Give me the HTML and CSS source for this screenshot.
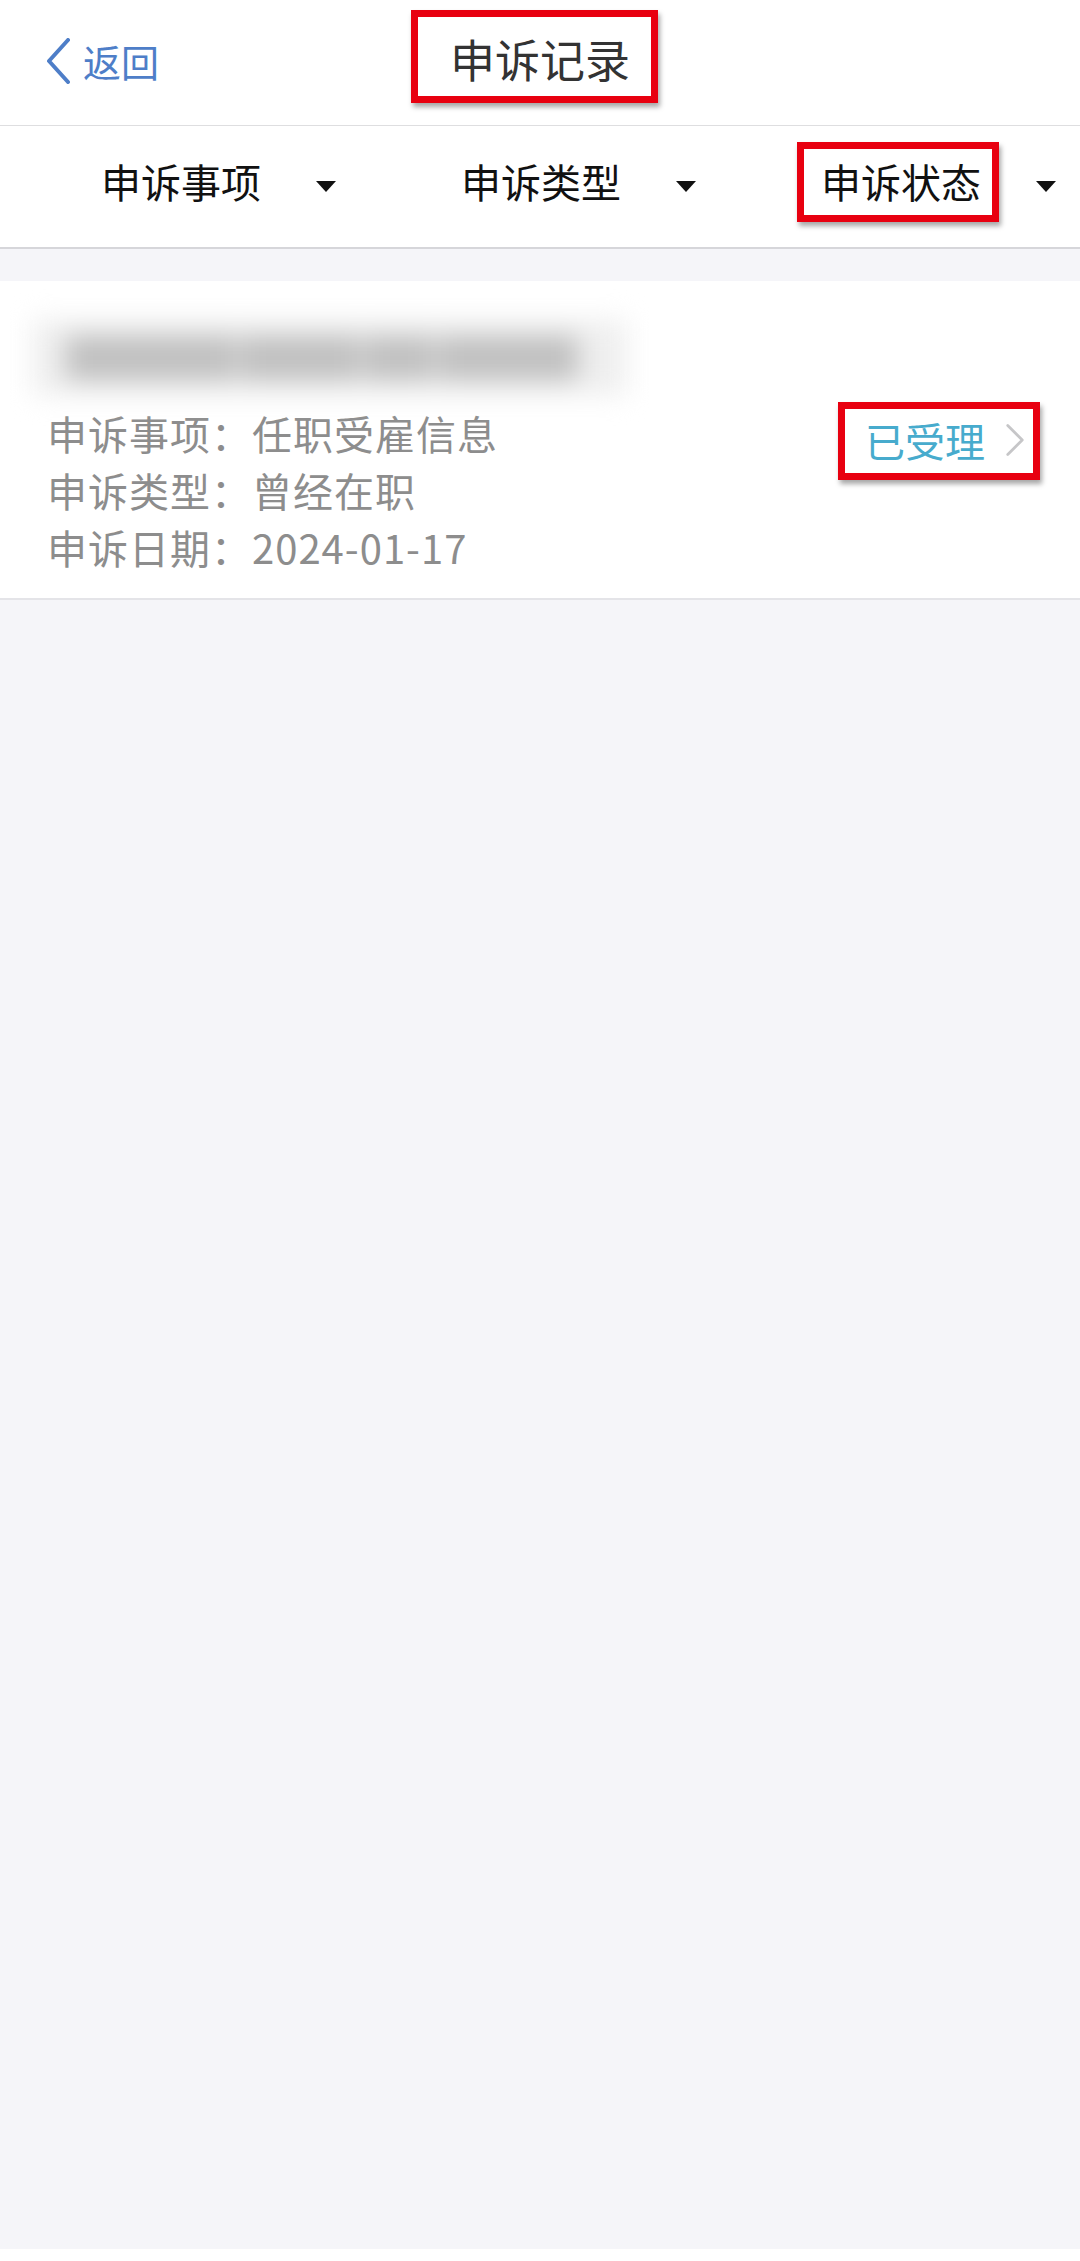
FILE: index.html
```html
<!DOCTYPE html>
<html lang="zh-CN">
<head>
  <meta charset="UTF-8" />
  <meta name="viewport" content="width=device-width, initial-scale=1.0"/>
  <title>申诉记录</title>
  <link rel="stylesheet" href="styles.css">
</head>
<body>

<div class="page">
  <!-- TOP BAR -->
  <header class="topbar">
    <a class="back">
      <svg viewBox="0 0 26 46" class="back-icon">
        <path d="M23 2 L4 23 L23 44" fill="none" stroke="currentColor" stroke-width="4" stroke-linecap="round" stroke-linejoin="round"/>
      </svg>
      <span>返回</span>
    </a>
    <h1 class="title marked">申诉记录</h1>
    <div></div>
  </header>

  <!-- FILTERS -->
  <nav class="filters">
    <div class="filter"><span class="label">申诉事项</span><i class="caret"></i></div>
    <div class="filter"><span class="label">申诉类型</span><i class="caret"></i></div>
    <div class="filter"><span class="label marked">申诉状态</span><i class="caret"></i></div>
  </nav>

  <!-- RECORD LIST -->
  <div class="record">
    <div class="record-info">
      <div class="name-blur">
        <span style="width: 170px"></span>
        <span style="width: 120px"></span>
        <span style="width: 70px"></span>
        <span style="width: 140px"></span>
      </div>
      <p>申诉事项：任职受雇信息</p>
      <p>申诉类型：曾经在职</p>
      <p>申诉日期：2024-01-17</p>
    </div>
    <div class="status marked">
      <span>已受理</span>
      <svg viewBox="0 0 22 36" class="arrow">
        <path d="M3 2 L19 18 L3 34" fill="none" stroke="currentColor" stroke-width="3" stroke-linecap="round" stroke-linejoin="round"/>
      </svg>
    </div>
  </div>
</div>

</body>
</html>
```

FILE: styles.css
```css
:root {
  --bg: #f5f5f9;
  --blue: #4e7ec8;
  --teal: #47abcd;
  --mark: #e80010;
}

* {
  box-sizing: border-box;
  margin: 0;
  padding: 0;
}

html, body {
  background: #fff;
}

body {
  font-family: "Noto Sans CJK SC", "Noto Sans", sans-serif;
  color: #111;
}

.page {
  height: 2249px;
  background: var(--bg);
  overflow: hidden;
}

/* marker boxes drawn over the screenshot */
.marked {
  position: relative;
}

.marked::after {
  content: "";
  position: absolute;
  border: 7px solid var(--mark);
  box-shadow: 2px 4px 5px rgba(0, 0, 0, 0.35);
}

.topbar {
  display: grid;
  grid-template-columns: 1fr auto 1fr;
  align-items: center;
  height: 126px;
  background: #fff;
  border-bottom: 1px solid #dedee0;
}

.back {
  display: flex;
  align-items: center;
  gap: 12px;
  padding-left: 45px;
  color: var(--blue);
  font-size: 38px;
  line-height: 50px;
  margin-top: -4px;
}

.back-icon {
  width: 26px;
  height: 46px;
}

.title {
  font-size: 45px;
  font-weight: 400;
  line-height: 60px;
  color: #333;
  margin-top: -8px;
}

.title::after {
  left: -39px;
  right: -28px;
  top: -19px;
  bottom: -14px;
}

.filters {
  display: flex;
  height: 123px;
  background: #fff;
  border-bottom: 2px solid #d6d6da;
}

.filter {
  flex: 1;
  display: flex;
  align-items: center;
  padding: 0 24px 0 101px;
}

.filter .label {
  font-size: 40px;
  line-height: 56px;
  margin-bottom: 12px;
}

.filter .label::after {
  left: -24px;
  right: -18px;
  top: -11px;
  bottom: -13px;
}

.caret {
  margin-left: auto;
  width: 0;
  height: 0;
  border-left: 10.5px solid transparent;
  border-right: 10.5px solid transparent;
  border-top: 11px solid #111;
}

.record {
  display: flex;
  align-items: center;
  justify-content: space-between;
  margin-top: 32px;
  padding: 39px 55px 22px 32px;
  background: #fff;
  border-bottom: 2px solid #e4e4e8;
}

.name-blur {
  display: flex;
  align-items: center;
  gap: 4px;
  width: 595px;
  height: 75px;
  padding: 0 34px;
  margin-bottom: 10px;
  background: #efefef;
  filter: blur(13px);
}

.name-blur span {
  height: 44px;
  background: #c0c0c0;
}

.record-info p {
  padding-left: 15px;
  font-size: 40px;
  line-height: 57px;
  letter-spacing: 1px;
  color: #8d8d8d;
}

.status {
  display: flex;
  align-items: center;
  gap: 20px;
  margin-bottom: 16px;
  font-size: 40px;
  line-height: 56px;
  color: var(--teal);
}

.status::after {
  left: -27px;
  right: -15px;
  top: -10px;
  bottom: -12px;
}

.arrow {
  width: 20px;
  height: 34px;
  color: #c6c6c8;
}
```
